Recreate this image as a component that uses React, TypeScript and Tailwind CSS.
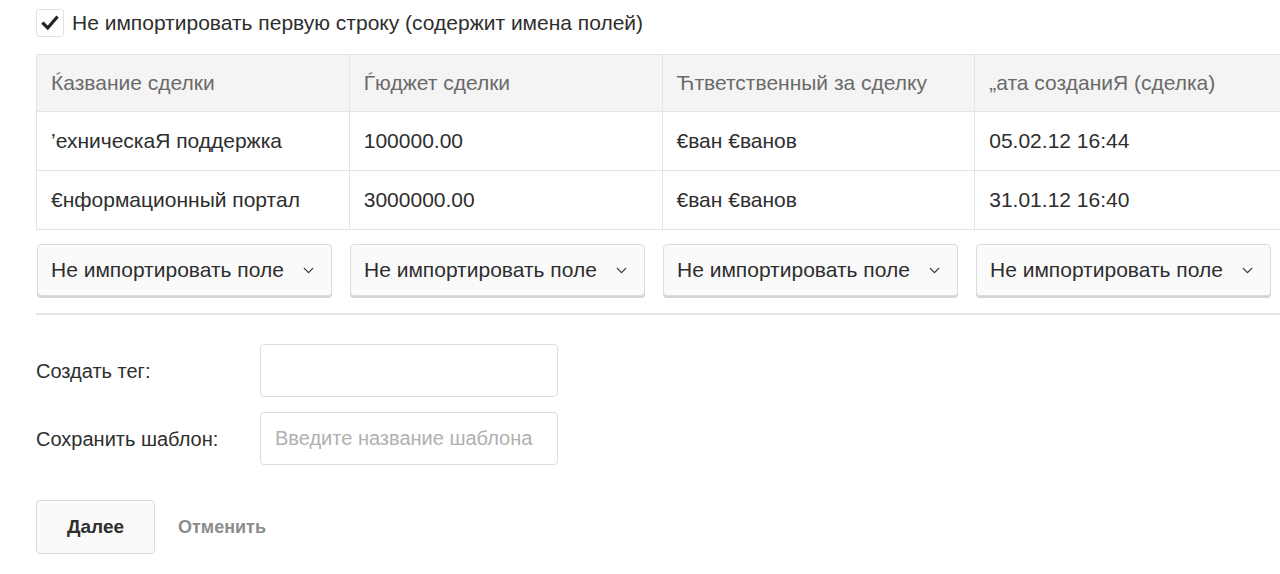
import React from 'react';
import { ChevronDown } from 'lucide-react';

const columns = ['Ќазвание сделки', 'Ѓюджет сделки', 'Ћтветственный за сделку', '„ата созданиЯ (сделка)'];

const rows = [
  ['’ехническаЯ поддержка', '100000.00', '€ван €ванов', '05.02.12 16:44'],
  ['€нформационный портал', '3000000.00', '€ван €ванов', '31.01.12 16:40'],
];

const FieldSelect = () => (
  <div className="flex h-[52px] w-[295px] shrink-0 items-center justify-between rounded-[4px] border border-[#dcdcdc] bg-[#fafafa] pl-[13px] pr-[14px] text-[21px] text-[#2e2e2e] shadow-[0_2px_0_#d4d4d4]">
    <span>Не импортировать поле</span>
    <ChevronDown className="h-[17px] w-[17px] text-[#333]" strokeWidth={1.75} />
  </div>
);

export default function App() {
  return (
    <div
      className="h-[574px] w-[1280px] overflow-hidden bg-white pl-[36px] text-[#2e2e2e]"
      style={{ fontFamily: '"Liberation Sans", Arial, sans-serif' }}
    >
      <label className="flex h-[46px] items-center gap-[8px]">
        <span className="flex h-[28px] w-[28px] items-center justify-center rounded-[3px] border border-[#e2e2e2] bg-white">
          <svg viewBox="0 0 16 16" className="h-[18px] w-[18px]">
            <path d="M2.2 8.6 L6 12.4 L13.8 3.2" fill="none" stroke="#222" strokeWidth="2.8" strokeLinecap="square" />
          </svg>
        </span>
        <span className="text-[21px]">Не импортировать первую строку (содержит имена полей)</span>
      </label>

      <div className="mt-[8px] w-[1252px] border-t border-l border-[#e4e4e4]">
        <div className="grid grid-cols-4 bg-[#f4f4f4]">
          {columns.map((c) => (
            <div key={c} className="flex h-[57px] items-center border-r border-b border-[#e4e4e4] px-[14px] text-[21px] text-[#6a6a6a]">
              {c}
            </div>
          ))}
        </div>
        {rows.map((r, i) => (
          <div key={i} className="grid grid-cols-4">
            {r.map((cell, j) => (
              <div key={j} className="flex h-[59px] items-center border-r border-b border-[#e4e4e4] px-[14px] text-[21px]">
                {cell}
              </div>
            ))}
          </div>
        ))}
      </div>

      <div className="mt-[14px] flex gap-[18px] pl-[1px]">
        <FieldSelect />
        <FieldSelect />
        <FieldSelect />
        <FieldSelect />
      </div>

      <div className="mt-[17px] h-[2px] w-[1244px] bg-[#e4e4e4]" />

      <div className="mt-[29px] flex flex-col gap-[15px]">
        <div className="flex items-center">
          <span className="w-[224px] text-[20px]">Создать тег:</span>
          <input className="h-[53px] w-[298px] rounded-[4px] border border-[#dedede] bg-white px-[14px] text-[20px] outline-none" />
        </div>
        <div className="flex items-center">
          <span className="w-[224px] text-[20px]">Сохранить шаблон:</span>
          <input
            placeholder="Введите название шаблона"
            className="h-[53px] w-[298px] rounded-[4px] border border-[#dedede] bg-white px-[14px] text-[20px] outline-none placeholder:text-[#b0b0b0]"
          />
        </div>
      </div>

      <div className="mt-[35px] flex items-center gap-[23px]">
        <button className="h-[54px] w-[119px] rounded-[4px] border border-[#dcdcdc] bg-[#fafafa] text-[19px] font-bold text-[#2e2e2e]">
          Далее
        </button>
        <button className="text-[18px] font-bold text-[#8c8c8c]">Отменить</button>
      </div>
    </div>
  );
}
